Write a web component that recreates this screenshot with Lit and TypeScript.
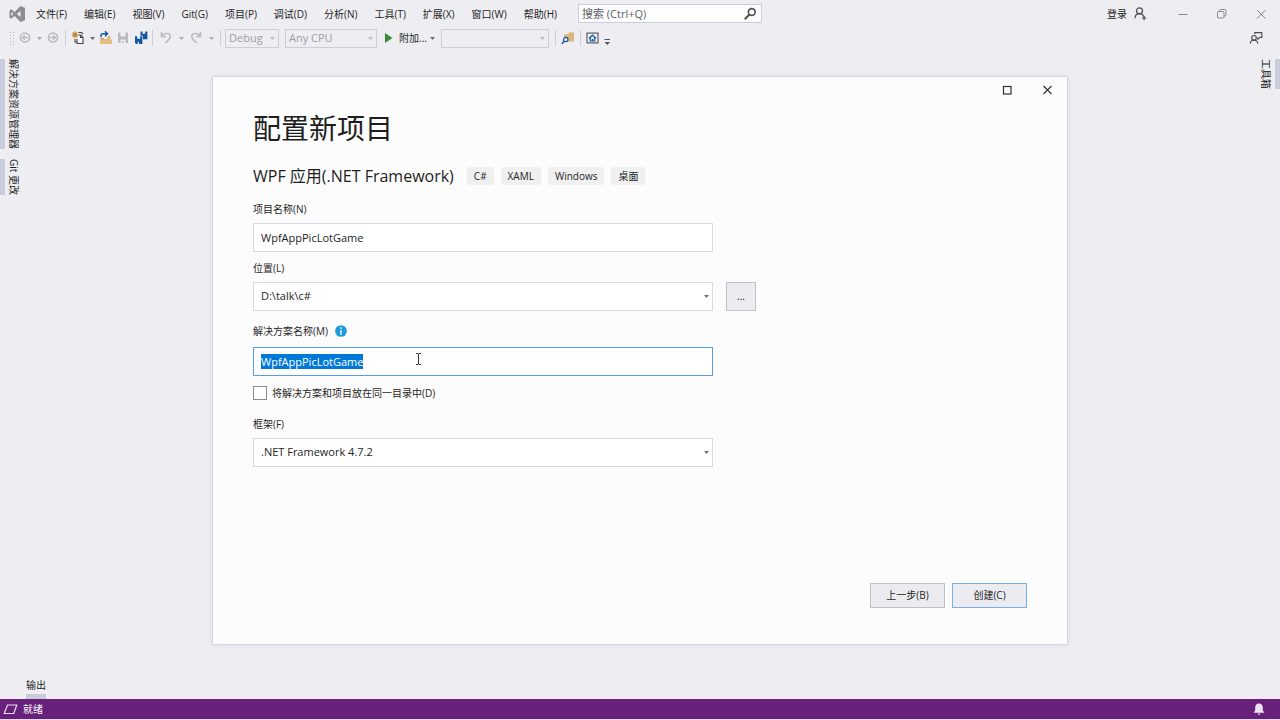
import { LitElement, html, css, svg } from "lit";
import { customElement, query } from "lit/decorators.js";

const MENUS = [
  "文件(F)", "编辑(E)", "视图(V)", "Git(G)", "项目(P)", "调试(D)",
  "分析(N)", "工具(T)", "扩展(X)", "窗口(W)", "帮助(H)",
];
const TAGS = ["C#", "XAML", "Windows", "桌面"];

const icon = (body: unknown, size = 16) =>
  html`<svg width=${size} height=${size} viewBox="0 0 16 16" aria-hidden="true">${body}</svg>`;

const caret = html`<svg class="caret" width="5" height="3" viewBox="0 0 5 3" aria-hidden="true"><path d="M0 0h5L2.5 3z" fill="currentColor" /></svg>`;

const ICONS = {
  logo: svg`<path fill="#8d8d95" fill-rule="evenodd" d="M11.500 0 16 1.800v12.400L11.500 16 5.600 10.100 2.300 12.700.5 11.800V4.200l1.800-.9 3.300 2.600zM11.500 5 7.800 8l3.700 3zM2.300 6v4l2-2z"/>`,
  back: svg`<circle cx="8" cy="7.500" r="4.500" fill="none" stroke="#b9bac2" stroke-width="1.600"/><path d="M10.800 7.500H5.600M7.800 5.300 5.600 7.500l2.200 2.200" fill="none" stroke="#b9bac2" stroke-width="1.300"/>`,
  forward: svg`<circle cx="8" cy="7.500" r="4.500" fill="none" stroke="#b9bac2" stroke-width="1.600"/><path d="M5.200 7.500h5.200M8.200 5.300 10.400 7.500l-2.200 2.200" fill="none" stroke="#b9bac2" stroke-width="1.300"/>`,
  create: svg`<path d="M8.500 5h2.200l2.300 2.200v6.300H7V9" fill="#f6f6f8" stroke="#45454b" stroke-width="1.100"/><path d="M10.500 5v2.500H13M5 9v3h2M8.500 2.500h3l1.500 1.500" fill="none" stroke="#45454b" stroke-width="1.100"/><path d="M5 1.200v7M1.500 4.700h7M2.600 2.300l4.800 4.800M7.400 2.300 2.600 7.100" stroke="#c48a35" stroke-width="1.100"/><circle cx="5" cy="4.700" r="2" fill="#c48a35"/>`,
  open: svg`<path d="M2.500 13.500V8h3l1 1.300h5v4.200z" fill="#cf9f58"/><path d="M9.500 6h3v5h-3z" fill="#dcb67a"/><path d="M1.500 14 3 9.500h11V14z" fill="#e3bd82"/><path d="M3 7.200V5.500C3 4.200 3.800 3.700 5 3.700h4M7 1.200l2.500 2.500L7 6.200" fill="none" stroke="#15559c" stroke-width="1.500"/>`,
  save: svg`<path fill="#b9bac2" fill-rule="evenodd" d="M3 2.500h10V13H4L3 12zM5.500 2.500v4h5v-4zM5.500 9.500V13h1.500v-2h1.500v2h2V9.500z"/>`,
  saveAll: svg`<path fill="#15559c" fill-rule="evenodd" d="M8.500 1.500h6.900v7.800H11V5.800H8.500zM10.500 1.500v2.200h2.700V1.500z"/><path fill="#15559c" fill-rule="evenodd" d="M3 6.300h7.400v7.700H4L3 13zM5.200 6.300v2.400h3V6.300zM5.700 11.800V14H7v-2.200z"/>`,
  undo: svg`<path d="M3.500 2v4.500H8M3.800 6.200C5.800 2.800 12 2.300 12.300 6.300c.2 2.700-2.300 4-4.700 6.700" fill="none" stroke="#b9bac2" stroke-width="1.600"/>`,
  redo: svg`<path d="M12.500 2v4.500H8M12.200 6.200C10.200 2.800 4 2.300 3.700 6.300c-.2 2.700 2.300 4 4.700 6.700" fill="none" stroke="#b9bac2" stroke-width="1.600"/>`,
  play: svg`<path d="M3 3v10l7.500-5z" fill="#388a34"/>`,
  find: svg`<path d="M4 4.500 8 4l1-1.500h5v9H4z" fill="#dcb67a"/><circle cx="5.800" cy="9.500" r="2.200" fill="#eeeef2" stroke="#15559c" stroke-width="1.200"/><path d="M4.300 11.200 1.800 13.700" stroke="#15559c" stroke-width="1.500"/>`,
  home: svg`<rect x="2" y="3.100" width="11" height="9.800" fill="#f6f6f8" stroke="#5a5a62" stroke-width="1.200"/><path d="M4 8.200 7.500 5 11 8.200M5.200 7.700v3.300h4.600V7.700" fill="#c5daf0" stroke="#15559c" stroke-width="1.200"/><path d="M6.900 11V9h1.200v2z" fill="#15559c"/>`,
  overflow: svg`<path d="M2.500 9.500h5.500" stroke="#55555c"/><path d="M2.500 12h5.500L5.250 15z" fill="#55555c"/>`,
  lens: svg`<circle cx="9.800" cy="6" r="3.400" fill="none" stroke="#4b4b52" stroke-width="1.600"/><path d="M7.400 8.500 2.800 13.200" stroke="#4b4b52" stroke-width="2"/>`,
  signIn: svg`<circle cx="7.500" cy="4.800" r="3" fill="none" stroke="#4b4b52" stroke-width="1.200"/><path d="M3 12.300c0-5.800 7.500-6 8.600-1.800M12.100 9.800v4.400M9.900 12h4.400" fill="none" stroke="#4b4b52" stroke-width="1.200"/>`,
  feedback: svg`<circle cx="6" cy="7.800" r="2.300" fill="none" stroke="#4b4b52" stroke-width="1.100"/><path d="M2.300 13.800c0-4.600 7.100-4.900 7.500 0M6.800 4.200V2.600h7v4.800h-2l-2 1.800V7.400" fill="none" stroke="#4b4b52" stroke-width="1.100"/>`,
  minimize: svg`<path d="M3.500 8.500h9" stroke="#8a8a92"/>`,
  restore: svg`<rect x="3.500" y="5.500" width="6.500" height="6.500" rx="1" fill="none" stroke="#8a8a92"/><path d="M5.500 5.300V4.500q0-1 1-1h4.500q1 0 1 1V9q0 1-1 1h-.8" fill="none" stroke="#8a8a92"/>`,
  close: svg`<path d="m4 4 8.500 8.500M12.500 4 4 12.500" stroke="#85858d"/>`,
  maximize: svg`<rect x="4.500" y="4.500" width="7.500" height="7.500" fill="none" stroke="#303036" stroke-width="1.200"/>`,
  closeDialog: svg`<path d="m4.500 4 8 8M12.500 4l-8 8" stroke="#303036" stroke-width="1.100"/>`,
  info: svg`<circle cx="8" cy="8" r="7.800" fill="#1c9ad9"/><path d="M8 6.800v6.200M8 3v2.200" stroke="#fff" stroke-width="1.800"/>`,
  task: svg`<path d="M5.500 4h9.300l-3 8.500H2.200z" fill="none" stroke="#eadcf0" stroke-width="1.200"/>`,
  bell: svg`<path d="M8 2.500c2.500 0 3.800 1.800 3.800 4v3l1.700 2.300h-11L4.200 9.500v-3c0-2.200 1.300-4 3.800-4zM6.500 12.500h3L8 14.200z" fill="#f0e4f4"/>`,
};

@customElement("app-root")
export class AppRoot extends LitElement {
  @query("#solution") solution!: HTMLInputElement;

  firstUpdated() {
    this.solution.focus();
    this.solution.select();
  }

  static styles = css`
    :host {
      --line: #cccedb;
      --ink: #1e1e1e;
      display: flex;
      flex-direction: column;
      position: relative;
      min-height: 100vh;
      background: #eeeef2;
      color: var(--ink);
      font: 10px/14px "Open Sans", "Noto Sans CJK SC", sans-serif;
    }
    * { box-sizing: border-box; }
    svg { display: block; flex: none; }
    button, input, select { font: inherit; color: inherit; margin: 0; border-radius: 0; }
    button { display: flex; align-items: center; justify-content: center; padding: 0; border: 0; background: none; }
    h1, h2, p, ul { margin: 0; padding: 0; font-weight: 400; list-style: none; }

    .titlebar { display: flex; align-items: center; height: 27px; padding: 0 11px 0 9px; }
    .menus { display: flex; gap: 17px; padding: 0 21px 0 11px; }
    .menus button { white-space: nowrap; }
    .search { display: flex; align-items: center; width: 184px; height: 19px; padding-right: 3px; background: #fdfdfe; border: 1px solid var(--line); }
    .search input { flex: 1; min-width: 0; padding: 0 3px; border: 0; background: none; outline: 0; font-size: 11px; }
    .search input::placeholder { color: #5f5f66; opacity: 1; }
    .window { display: flex; align-items: center; margin-left: auto; }
    .signin { gap: 5px; margin-right: 27px; }
    .controls { display: flex; gap: 23px; }

    .toolbar { display: flex; align-items: center; gap: 1px; height: 22px; padding: 0 16px 0 9px; }
    .grip { width: 5px; height: 14px; margin-right: 2px; background: radial-gradient(circle, #b5b6c0 1px, transparent 1px) 0 0 / 3px 3px; }
    .drop { width: 10px; height: 16px; color: #68686f; }
    .dim { color: #a9aab2; }
    .wide { width: 18px; }
    .sep { width: 1px; height: 16px; margin: 0 3px; background: var(--line); }
    .combo { display: grid; align-items: center; }
    .combo > * { grid-area: 1 / 1; }
    .combo select { appearance: none; width: 100%; background: none; border: 1px solid var(--line); outline: 0; opacity: 1; }
    .combo .caret { justify-self: end; margin-right: 4px; pointer-events: none; color: #717178; }
    .toolbar .combo { color: #9d9ea6; font-size: 11px; }
    .toolbar .combo select { height: 19px; padding: 0 3px; color: #9d9ea6; }
    .toolbar .combo .caret { color: #b9bac2; }
    .config { width: 54px; margin-right: 5px; }
    .platform { width: 92px; margin-right: 4px; }
    .process { width: 108px; margin: 0 2px; }
    .attach { gap: 1px; }
    .feedback { margin-left: auto; }

    .workspace { display: flex; flex: 1; justify-content: space-between; padding-top: 10px; }
    .side { display: flex; flex-direction: column; gap: 10px; }
    .side button { writing-mode: vertical-rl; text-orientation: sideways; line-height: 14px; white-space: nowrap; }
    .left button { padding-left: 2px; border-left: 5px solid #c9cddb; }
    .right button { padding-right: 2px; border-right: 5px solid #c9cddb; }
    .output { padding-left: 26px; }
    .output button { height: 21px; padding-bottom: 2px; border-bottom: 5px solid #c9cddb; }

    .status { display: flex; align-items: center; justify-content: space-between; height: 21px; padding: 0 13px 0 2px; color: #fff; background: #68217a; border-bottom: 1px solid #e6dcea; }
    .status p { display: flex; align-items: center; gap: 5px; }

    .overlay { position: absolute; inset: 0; display: grid; place-items: center; }
    .dialog { width: min(854px, 90%); background: #fcfcfc; outline: 1px solid #d5d6e2; box-shadow: 0 0 5px #c9cad8; }
    .caption { display: flex; justify-content: flex-end; gap: 24px; height: 26px; padding: 0 12px 0 0; }
    .content { padding: 0 40px 36px; }
    h1 { font-size: 28px; line-height: 50px; }
    .kind { display: flex; align-items: center; gap: 13px; height: 44px; padding-top: 2px; }
    h2 { font-size: 16px; line-height: 24px; white-space: nowrap; }
    .tags { display: flex; gap: 7px; }
    .tags li { padding: 2px 7px; background: #f0f0f1; border-radius: 2px; }
    .form { display: grid; grid-template-columns: minmax(0, 460px) 30px; column-gap: 13px; padding-top: 5px; }
    .form > * { grid-column: 1; }
    .form .browse { grid-column: 2; }
    .label { margin-bottom: 7px; }
    .field { height: 29px; padding: 0 7px; font-size: 11px; background: #fff; border: 1px solid #d9dae3; outline: 0; }
    .field:focus { border-color: #569de5; }
    .field::selection { color: #fff; background: #0078d7; }
    .form select { height: 29px; padding: 0 7px; font-size: 11px; background: #fff; border-color: #d9dae3; }
    .path { margin-bottom: 11px; }
    .name { margin-bottom: 9px; }
    .solution-label { display: flex; align-items: center; gap: 7px; height: 18px; }
    .solution { position: relative; display: grid; margin-bottom: 10px; }
    .pointer { position: absolute; left: 162px; top: 6px; }
    .browse { height: 29px; background: #ececf0; border: 1px solid #c0c1c8; }
    .check { display: flex; align-items: center; gap: 5px; margin-bottom: 17px; }
    .check input { appearance: none; width: 14px; height: 14px; background: #fff; border: 1px solid #8a8a90; }
    .actions { display: flex; justify-content: flex-end; gap: 7px; margin-top: 116px; }
    .actions button { width: 75px; height: 25px; background: #ececf0; border: 1px solid #c0c1c8; }
    .actions .primary { border-color: #78b0e4; }
  `;

  private tool(name: keyof typeof ICONS, label: string, cls = "") {
    return html`<button class=${cls} aria-label=${label}>${icon(ICONS[name])}</button>`;
  }

  private drop(label: string, cls = "") {
    return html`<button class="drop ${cls}" aria-label=${label}>${caret}</button>`;
  }

  render() {
    return html`
      <header class="titlebar">
        ${icon(ICONS.logo)}
        <nav class="menus">${MENUS.map((m) => html`<button>${m}</button>`)}</nav>
        <div class="search">
          <input type="search" aria-label="搜索" placeholder="搜索 (Ctrl+Q)" />
          ${icon(ICONS.lens)}
        </div>
        <div class="window">
          <button class="signin">登录 ${icon(ICONS.signIn)}</button>
          <div class="controls">
            ${this.tool("minimize", "最小化")} ${this.tool("restore", "还原")} ${this.tool("close", "关闭")}
          </div>
        </div>
      </header>

      <div class="toolbar">
        <span class="grip"></span>
        ${this.tool("back", "后退")}${this.drop("后退列表", "dim")}${this.tool("forward", "前进")}
        <span class="sep"></span>
        ${this.tool("create", "新建项目")}${this.drop("新建列表")}${this.tool("open", "打开")}
        ${this.tool("save", "保存")}${this.tool("saveAll", "全部保存")}
        <span class="sep"></span>
        ${this.tool("undo", "撤消", "wide")}${this.drop("撤消列表", "dim")}
        ${this.tool("redo", "重做", "wide")}${this.drop("重做列表", "dim")}
        <span class="sep"></span>
        <div class="combo config"><select aria-label="解决方案配置" disabled><option>Debug</option></select>${caret}</div>
        <div class="combo platform"><select aria-label="解决方案平台" disabled><option>Any CPU</option></select>${caret}</div>
        <button class="attach">${icon(ICONS.play)}附加...</button>${this.drop("附加列表")}
        <div class="combo process"><select aria-label="进程" disabled><option></option></select>${caret}</div>
        <span class="sep"></span>
        ${this.tool("find", "在文件中查找")}
        <span class="sep"></span>
        ${this.tool("home", "起始页")}${this.tool("overflow", "工具栏选项")}
        ${this.tool("feedback", "发送反馈", "feedback")}
      </div>

      <main class="workspace">
        <div class="side left"><button>解决方案资源管理器</button><button>Git 更改</button></div>
        <div class="side right"><button>工具箱</button></div>
      </main>
      <div class="output"><button>输出</button></div>
      <footer class="status">
        <p>${icon(ICONS.task)}就绪</p>
        ${this.tool("bell", "通知")}
      </footer>

      <div class="overlay">
        <section class="dialog" role="dialog" aria-labelledby="title">
          <div class="caption">${this.tool("maximize", "最大化")}${this.tool("closeDialog", "关闭")}</div>
          <div class="content">
            <h1 id="title">配置新项目</h1>
            <div class="kind">
              <h2>WPF 应用(.NET Framework)</h2>
              <ul class="tags">${TAGS.map((t) => html`<li>${t}</li>`)}</ul>
            </div>
            <div class="form">
              <label class="label" for="name">项目名称(N)</label>
              <input class="field name" id="name" value="WpfAppPicLotGame" />
              <label class="label" for="path">位置(L)</label>
              <div class="combo path"><select id="path"><option>D:\\talk\\c#</option></select>${caret}</div>
              <button class="browse" aria-label="浏览">...</button>
              <div class="label solution-label">
                <label for="solution">解决方案名称(M)</label>${icon(ICONS.info, 12)}
              </div>
              <div class="solution">
                <input class="field" id="solution" value="WpfAppPicLotGame" />
                <svg class="pointer" width="7" height="12" viewBox="0 0 7 12" aria-hidden="true">
                  <path d="M1 .5h2l.5.5.5-.5h2M3.500 1v10M1 11.500h2l.5-.5.5.5h2" fill="none" stroke="#3a3a3a" />
                </svg>
              </div>
              <label class="check"><input type="checkbox" />将解决方案和项目放在同一目录中(D)</label>
              <label class="label" for="framework">框架(F)</label>
              <div class="combo"><select id="framework"><option>.NET Framework 4.7.2</option></select>${caret}</div>
            </div>
            <div class="actions"><button>上一步(B)</button><button class="primary">创建(C)</button></div>
          </div>
        </section>
      </div>
    `;
  }
}
